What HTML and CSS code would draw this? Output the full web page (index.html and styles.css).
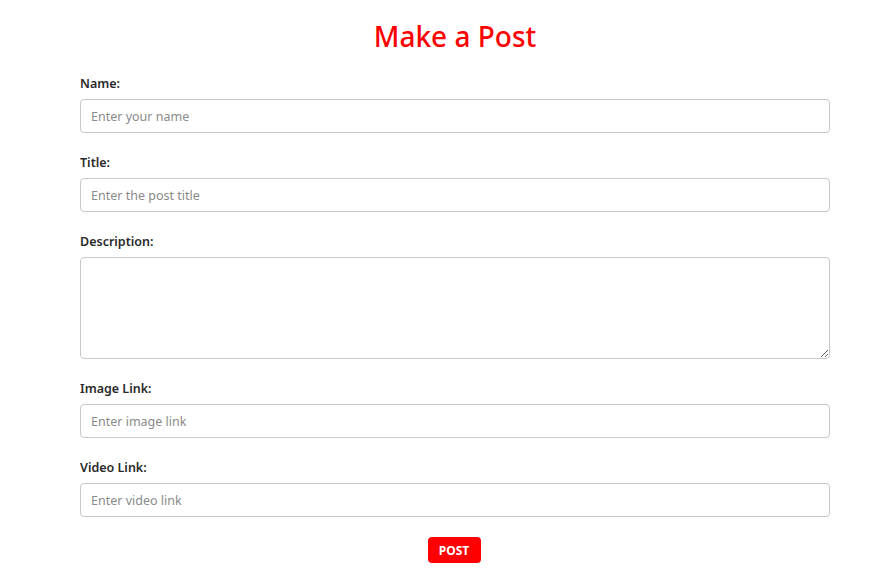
FILE: index.html
```html
<!DOCTYPE html>
<html>
<head>
<meta charset="utf-8">
<link rel="stylesheet" href="styles.css">
</head>
<body>
<div class="container">
  <h1 class="title">Make a Post</h1>
  <form class="form">
    <div class="group">
      <label class="label">Name:</label>
      <input class="input" type="text" placeholder="Enter your name">
    </div>
    <div class="group">
      <label class="label">Title:</label>
      <input class="input" type="text" placeholder="Enter the post title">
    </div>
    <div class="group">
      <label class="label">Description:</label>
      <textarea class="input textarea"></textarea>
    </div>
    <div class="group">
      <label class="label">Image Link:</label>
      <input class="input" type="text" placeholder="Enter image link">
    </div>
    <div class="group">
      <label class="label">Video Link:</label>
      <input class="input" type="text" placeholder="Enter video link">
    </div>
    <div class="actions">
      <button class="btn" type="button">POST</button>
    </div>
  </form>
</div>
</body>
</html>
```
FILE: styles.css
```css
* { box-sizing: border-box; }
html, body { margin: 0; padding: 0; background: #fff; }
body { font-family: "Noto Sans", "Open Sans", sans-serif; color: #222; }
.container { width: 750px; margin-left: 80px; padding-top: 17px; }
.title {
  margin: 0 0 21px;
  text-align: center;
  color: #ff0000;
  font-weight: 500;
  font-size: 28px;
  line-height: 38px;
}
.form { display: flex; flex-direction: column; gap: 22px; }
.group { display: flex; flex-direction: column; gap: 7px; }
.label { font-size: 12.5px; font-weight: 600; line-height: 16px; color: #2a2a2a; }
.input {
  width: 100%;
  height: 34px;
  border: 1px solid #c8c8c8;
  border-radius: 4px;
  padding: 0 10px;
  font-family: inherit;
  font-size: 12.5px;
  color: #333;
  background: #fff;
  outline: none;
}
.input::placeholder { color: #8a8a8a; }
.textarea { height: 102px; resize: vertical; padding: 8px 10px; display: block; }
.actions { display: flex; justify-content: center; margin-top: -2px; }
.btn {
  background: #ff0000;
  color: #fff;
  border: none;
  border-radius: 4px;
  width: 53px;
  height: 26px;
  margin-left: -2px;
  font-family: inherit;
  font-weight: 700;
  font-size: 12px;
  padding: 0;
}
```
